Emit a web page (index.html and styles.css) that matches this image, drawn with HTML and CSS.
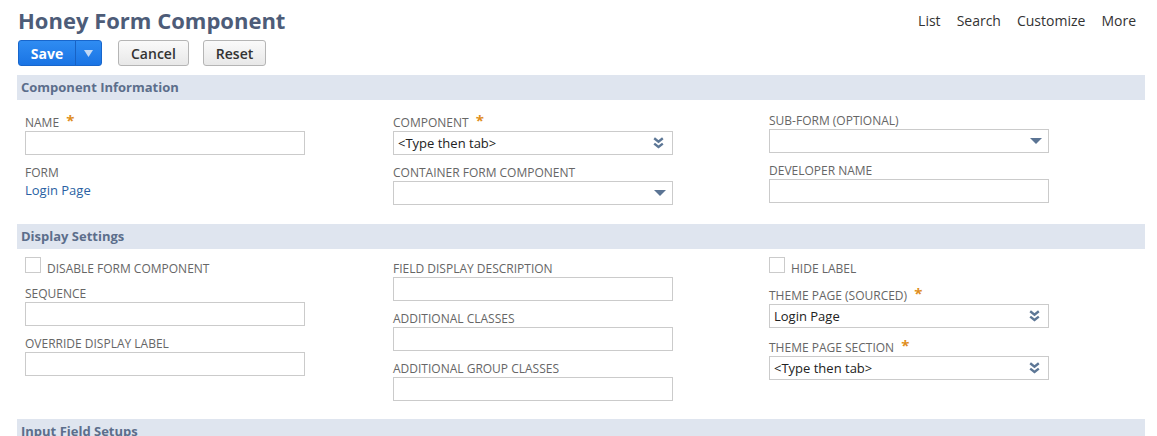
FILE: index.html
```html
<!DOCTYPE html>
<html lang="en">
<head>
<meta charset="utf-8">
<title>Honey Form Component</title>
<link rel="stylesheet" href="styles.css">
</head>
<body>
<div class="page">
  <div class="topbar">
    <h1 class="title">Honey Form Component</h1>
    <nav class="nav">
      <a class="nav-item">List</a>
      <a class="nav-item">Search</a>
      <a class="nav-item">Customize</a>
      <a class="nav-item">More</a>
    </nav>
  </div>

  <div class="actions">
    <div class="btn-split">
      <button class="btn-primary">Save</button>
      <button class="btn-primary-arrow"><svg width="9" height="7" viewBox="0 0 9 7"><polygon points="0,0 9,0 4.5,7" fill="#c3d9f5"/></svg></button>
    </div>
    <button class="btn">Cancel</button>
    <button class="btn btn--reset">Reset</button>
  </div>

  <section class="section">
    <div class="section-head">Component Information</div>
    <div class="section-body">
      <div class="col">
        <div class="field">
          <div class="label label--req">NAME <span class="req">*</span></div>
          <div class="input"></div>
        </div>
        <div class="field">
          <div class="label">FORM</div>
          <a class="link">Login Page</a>
        </div>
      </div>
      <div class="col">
        <div class="field">
          <div class="label label--req">COMPONENT <span class="req">*</span></div>
          <div class="input input--select"><span class="value">&lt;Type then tab&gt;</span>
            <svg class="icon-dbl" width="11" height="12" viewBox="0 0 11 12"><path d="M1.2 1.2 L5.5 4.6 L9.8 1.2" fill="none" stroke="#5d7796" stroke-width="2.4"/><path d="M1.2 6.6 L5.5 10 L9.8 6.6" fill="none" stroke="#5d7796" stroke-width="2.4"/></svg>
          </div>
        </div>
        <div class="field">
          <div class="label">CONTAINER FORM COMPONENT</div>
          <div class="input input--select">
            <svg class="icon-tri" width="12" height="6" viewBox="0 0 12 6"><polygon points="0,0 12,0 6,6" fill="#5b7494"/></svg>
          </div>
        </div>
      </div>
      <div class="col">
        <div class="field">
          <div class="label">SUB-FORM (OPTIONAL)</div>
          <div class="input input--select">
            <svg class="icon-tri" width="12" height="6" viewBox="0 0 12 6"><polygon points="0,0 12,0 6,6" fill="#5b7494"/></svg>
          </div>
        </div>
        <div class="field">
          <div class="label">DEVELOPER NAME</div>
          <div class="input"></div>
        </div>
      </div>
    </div>
  </section>

  <section class="section">
    <div class="section-head">Display Settings</div>
    <div class="section-body section-body--tight">
      <div class="col">
        <div class="check-row">
          <span class="checkbox"></span>
          <span class="check-label">DISABLE FORM COMPONENT</span>
        </div>
        <div class="field">
          <div class="label">SEQUENCE</div>
          <div class="input"></div>
        </div>
        <div class="field">
          <div class="label">OVERRIDE DISPLAY LABEL</div>
          <div class="input"></div>
        </div>
      </div>
      <div class="col">
        <div class="field">
          <div class="label">FIELD DISPLAY DESCRIPTION</div>
          <div class="input"></div>
        </div>
        <div class="field">
          <div class="label">ADDITIONAL CLASSES</div>
          <div class="input"></div>
        </div>
        <div class="field">
          <div class="label">ADDITIONAL GROUP CLASSES</div>
          <div class="input"></div>
        </div>
      </div>
      <div class="col">
        <div class="check-row">
          <span class="checkbox"></span>
          <span class="check-label">HIDE LABEL</span>
        </div>
        <div class="field">
          <div class="label label--req">THEME PAGE (SOURCED) <span class="req">*</span></div>
          <div class="input input--select"><span class="value">Login Page</span>
            <svg class="icon-dbl" width="11" height="12" viewBox="0 0 11 12"><path d="M1.2 1.2 L5.5 4.6 L9.8 1.2" fill="none" stroke="#5d7796" stroke-width="2.4"/><path d="M1.2 6.6 L5.5 10 L9.8 6.6" fill="none" stroke="#5d7796" stroke-width="2.4"/></svg>
          </div>
        </div>
        <div class="field">
          <div class="label label--req">THEME PAGE SECTION <span class="req">*</span></div>
          <div class="input input--select"><span class="value">&lt;Type then tab&gt;</span>
            <svg class="icon-dbl" width="11" height="12" viewBox="0 0 11 12"><path d="M1.2 1.2 L5.5 4.6 L9.8 1.2" fill="none" stroke="#5d7796" stroke-width="2.4"/><path d="M1.2 6.6 L5.5 10 L9.8 6.6" fill="none" stroke="#5d7796" stroke-width="2.4"/></svg>
          </div>
        </div>
      </div>
    </div>
  </section>

  <section class="section">
    <div class="section-head">Input Field Setups</div>
  </section>
</div>
</body>
</html>
```
FILE: styles.css
```css
* { box-sizing: border-box; }
html, body { margin: 0; padding: 0; background: #fff; }
body {
  font-family: "Open Sans", "Noto Sans", sans-serif;
  color: #333;
  overflow: hidden;
}
.page {
  padding: 5px 12px 0 17px;
  width: 1157px;
}
.topbar {
  display: flex;
  justify-content: space-between;
  align-items: flex-start;
  padding-left: 1px;
}
.title {
  margin: 0;
  font-size: 22px;
  line-height: 30px;
  font-weight: 700;
  color: #4d5c78;
}
.nav {
  display: flex;
  gap: 16px;
  padding-right: 9px;
  margin-top: 6px;
}
.nav-item {
  font-size: 14px;
  line-height: 19px;
  color: #333;
  text-decoration: none;
}
.actions {
  display: flex;
  align-items: center;
  margin-top: 5px;
  padding-left: 1px;
}
.btn-split {
  display: flex;
  height: 26px;
  border: 1px solid #1866cc;
  border-radius: 3px;
  overflow: hidden;
  background: linear-gradient(#2f8cf2, #1a74e4);
  margin-right: 16px;
}
.btn-primary, .btn-primary-arrow {
  border: 0;
  background: transparent;
  color: #fff;
  font-family: inherit;
  font-weight: 700;
  font-size: 14px;
  padding: 0;
  margin: 0;
  height: 24px;
}
.btn-primary { width: 56px; }
.btn-primary-arrow {
  width: 26px;
  border-left: 1px solid #1862c4;
  display: flex;
  align-items: center;
  justify-content: center;
}
.btn {
  height: 26px;
  padding: 0 12px;
  border: 1px solid #b5b5b5;
  border-radius: 3px;
  background: linear-gradient(#fafafa, #e8e8e8);
  font-family: inherit;
  font-size: 14px;
  font-weight: 600;
  color: #333;
  margin-right: 14px;
}
.btn--reset { width: 63px; }

.section-head {
  height: 25px;
  line-height: 25px;
  background: #dfe5ef;
  color: #5c6e8b;
  font-weight: 700;
  font-size: 13px;
  padding-left: 4px;
}
.actions + .section { margin-top: 9px; }
.section-body {
  display: grid;
  grid-template-columns: 368px 376px 1fr;
  padding: 12px 0 10px 8px;
}
.section-body--tight { padding: 11px 0 9px 8px; }
.col { display: flex; flex-direction: column; }
.field { margin-bottom: 9px; }
.label {
  font-size: 12px;
  line-height: 17px;
  height: 17px;
  color: #666;
  white-space: nowrap;
}
.label--req { height: 19px; line-height: 19px; }
.req {
  color: #df8e1c;
  font-weight: 700;
  font-size: 15px;
  margin-left: 4px;
  position: relative;
  top: -1px;
}
.input {
  width: 280px;
  height: 24px;
  border: 1px solid #cbcbcb;
  background: #fff;
  display: flex;
  align-items: center;
  padding: 0 6px 0 4px;
}
.input--select { justify-content: space-between; }
.input--select .icon-tri { margin-left: auto; margin-right: 0; }
.input--select .icon-dbl { margin-left: auto; margin-right: 2px; }
.value {
  font-size: 13px;
  color: #222;
  white-space: nowrap;
}
.link {
  display: block;
  font-size: 13px;
  line-height: 18px;
  color: #2a5fa3;
  text-decoration: none;
}
.check-row {
  display: flex;
  align-items: flex-start;
  margin-top: -3px;
  margin-bottom: 8px;
  height: 20px;
}
.checkbox {
  width: 16px;
  height: 16px;
  border: 1px solid #cbcbcb;
  background: #fff;
  margin-right: 6px;
}
.check-label {
  font-size: 12px;
  line-height: 17px;
  color: #666;
  margin-top: 3px;
}
```
